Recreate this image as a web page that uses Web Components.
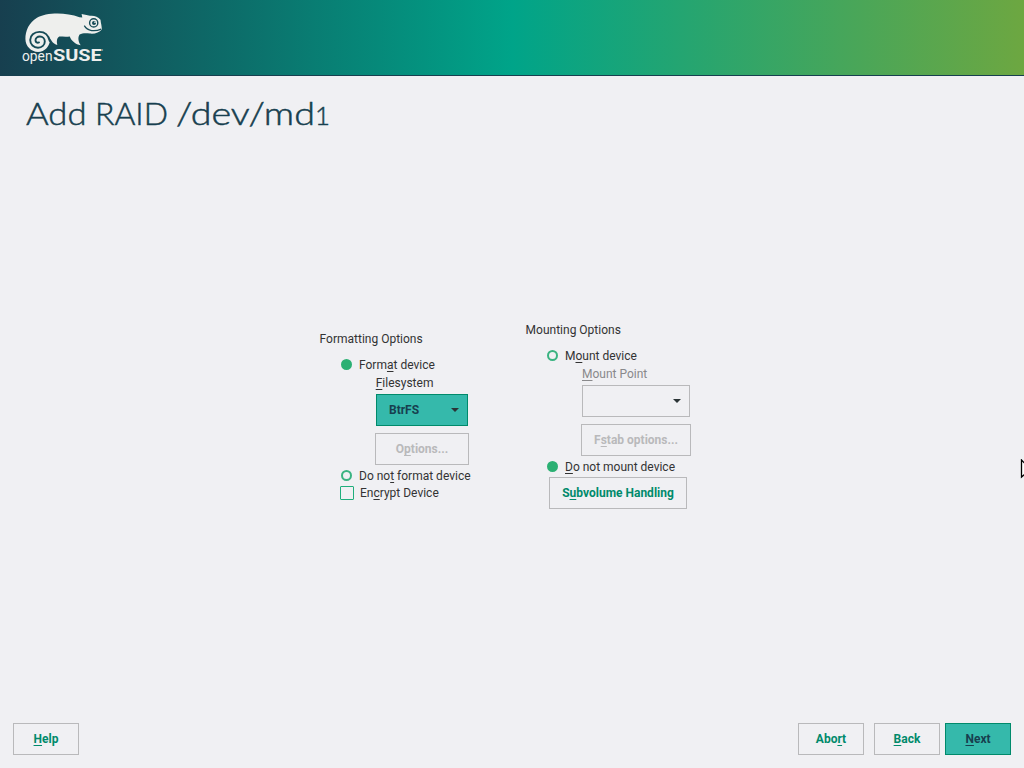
<!DOCTYPE html>
<html lang="en">
<head>
<meta charset="utf-8">
<title>Add RAID</title>
<style>
html,body{margin:0;height:100%;overflow:hidden;background:#f0f0f3}
body{font:12px/16px Roboto,sans-serif;color:#333}
</style>
</head>
<body>
<raid-installer></raid-installer>
<script>
const define = (name, html) => customElements.define(name, class extends HTMLElement {
  constructor() {
    super();
    this.attachShadow({ mode: 'open' }).innerHTML = html;
  }
});

define('hot-key', `<style>
:host{text-decoration:underline;text-decoration-thickness:1px;text-underline-offset:2px;text-decoration-skip-ink:none}
</style><slot></slot>`);

define('suse-logo', `<style>:host{display:block;width:104px;height:70px}svg{display:block}</style>
<svg width="110" height="70" viewBox="0 0 110 70" fill="#eeefed">
<path d="M25.400 39C25.300 31 29 22.500 37 17.800C46 12.600 65 12 79.500 17.200L82.300 17.400L81.600 14L90 15.800C94 15.300 98 16.700 100.500 19.700C100.800 23 101.900 26 101.800 29.500C99.500 32.600 95 34 90 33.600C86 33 82.500 33 79.600 34.500C77.500 37.400 78.400 42 80.700 45.300C75.500 44.500 71 40.500 69.800 36.500C66 37.200 62.500 36.600 59.300 36.600C56.500 38 56.700 41.800 57.300 44.900C53 43.700 51.500 40.700 50.200 38.400C50 46.500 44.700 51.900 38 51.900C31 51.900 25.400 46 25.400 39Z"/>
<path d="M49.800 41C48.400 35 44.600 31.900 39.500 31.900C34 31.900 30.200 35.600 30.200 40C30.200 44.500 33.700 47.700 38 47.700C42 47.700 44.800 45 44.800 41.500C44.800 38.600 42.600 36.500 39.900 36.500C37.300 36.500 35.400 38.200 35.500 40.400C35.600 42.200 37.200 43.200 39 42.400" fill="none" stroke="#164b57" stroke-width="1.900" stroke-linecap="round"/>
<path d="M84.300 25.600C87.500 31.500 95 31.700 101.200 29.100" fill="none" stroke="#164b57" stroke-width="1.200"/>
<circle cx="93.700" cy="22.900" r="4.100" fill="#eeefed" stroke="#164b57" stroke-width="1.400"/>
<circle cx="94" cy="22.900" r="2" fill="#164b57"/><ellipse cx="95" cy="22.200" rx="1" ry=".6"/>
<text x="22" y="61.300" font-family="Roboto,sans-serif" font-size="14" textLength="30.500" lengthAdjust="spacingAndGlyphs">open</text>
<text x="53" y="61.300" font-family="Roboto,sans-serif" font-weight="700" font-size="16" textLength="48.800" lengthAdjust="spacingAndGlyphs">SUSE</text>
<circle cx="102.500" cy="50" r=".7" opacity=".6"/>
</svg>`);

define('brand-bar', `<style>
:host{display:block;box-sizing:border-box;height:76px;border-bottom:1px solid #173f4f;background:linear-gradient(90deg,#173f4f 0%,#00a489 50%,#6da741 100%)}
</style><suse-logo></suse-logo>`);

define('page-title', `<style>:host{display:block;height:50px;padding-left:26px}svg{display:block;overflow:visible}
text{font-family:Lato,sans-serif;font-size:32px;font-weight:300;fill:#173f4f;stroke:#173f4f;stroke-width:.5px}</style>
<svg width="304" height="50" aria-label="Add RAID /dev/md1">
<text x="0" y="35" textLength="60.500" lengthAdjust="spacingAndGlyphs">Add</text>
<text x="69" y="35" textLength="73" lengthAdjust="spacingAndGlyphs">RAID</text>
<text x="150" y="35" textLength="139" lengthAdjust="spacingAndGlyphs">/dev/md</text>
<text x="289" y="35" style="font-size:25px" textLength="15" lengthAdjust="spacingAndGlyphs">1</text>
</svg>`);

define('push-button', `<style>
:host{display:flex;box-sizing:border-box;height:32px;min-width:66px;align-items:center;justify-content:center;border:1px solid #b9b9bb;color:#008a6b;font-weight:700}
:host([disabled]){color:#b9b9bb}
:host([primary]){background:#35b9ab;border-color:#008a6b;color:#173f4f}
</style><span><slot></slot></span>`);

define('combo-box', `<style>
:host{display:flex;box-sizing:border-box;height:32px;align-items:center;justify-content:space-between;padding:0 8px 0 12px;border:1px solid #b9b9bb;color:#173f4f;font-weight:700}
:host([active]){background:#35b9ab;border-color:#008a6b}
svg{display:block}
</style><span><slot></slot></span><svg width="8" height="4"><path d="M0 0H8L4 4Z" fill="#2b3436"/></svg>`);

define('radio-option', `<style>
:host{display:flex;height:18px;align-items:center;white-space:nowrap;padding-left:1px}
i{box-sizing:border-box;width:11px;height:11px;margin:0 7px 1px 0;border:2px solid #3ab381;border-radius:50%}
:host([checked]) i{background:#2bb073;border-color:#2bb073}
</style><i></i><span><slot></slot></span>`);

define('check-option', `<style>
:host{display:flex;height:16px;align-items:center;white-space:nowrap}
i{box-sizing:border-box;width:14px;height:14px;margin-right:6px;border:1px solid #1fae7c;border-radius:1px}
</style><i></i><span><slot></slot></span>`);

define('option-group', `<style>
:host{display:block;white-space:nowrap}
.head{padding-left:.6px}
.body{display:flex;flex-direction:column;align-items:flex-start;margin-top:9px;padding-left:21px}
</style><div class="head"><slot name="title"></slot></div><div class="body"><slot></slot></div>`);

define('raid-installer', `<style>
:host{display:flex;flex-direction:column;width:1024px;height:768px;position:relative;overflow:hidden}
page-title{margin-top:14px}
main{flex:1;display:flex;align-items:flex-start;gap:54px;padding:182px 0 0 319px}
.left{margin-top:9px;width:152px}
.label{height:18px;line-height:18px;margin-left:36px}
.dim{color:#89898b}
.fs{width:92px;margin:2px 0 0 36px}
.opt{width:94px;margin:7px 0 2px 35px}
.mp{width:108px;margin:2px 0 0 36px}
.fstab{width:110px;margin:7px 0 2px 35px}
.sub{width:138px;margin:1px 0 0 3px}
footer{display:flex;padding:0 13px 13px}
.gap{flex:1}
.back{margin:0 5px 0 10px}
.pointer{position:absolute;left:1020px;top:459px}
</style>
<brand-bar></brand-bar>
<page-title></page-title>
<main>
<option-group class="left"><span slot="title">Formatting Options</span>
<radio-option checked>Form<hot-key>a</hot-key>t device</radio-option>
<div class="label" style="margin-left:35.700px"><hot-key>F</hot-key>ilesystem</div>
<combo-box class="fs" active>BtrFS</combo-box>
<push-button class="opt" disabled>O<hot-key>p</hot-key>tions...</push-button>
<radio-option>Do no<hot-key>t</hot-key> format device</radio-option>
<check-option>En<hot-key>c</hot-key>rypt Device</check-option>
</option-group>
<option-group><span slot="title">Mounting Options</span>
<radio-option>M<hot-key>o</hot-key>unt device</radio-option>
<div class="label dim"><hot-key>M</hot-key>ount Point</div>
<combo-box class="mp"></combo-box>
<push-button class="fstab" disabled>F<hot-key>s</hot-key>tab options...</push-button>
<radio-option checked><hot-key>D</hot-key>o not mount device</radio-option>
<push-button class="sub">S<hot-key>u</hot-key>bvolume Handling</push-button>
</option-group>
</main>
<footer>
<push-button><hot-key>H</hot-key>elp</push-button><span class="gap"></span>
<push-button>Abo<hot-key>r</hot-key>t</push-button>
<push-button class="back"><hot-key>B</hot-key>ack</push-button>
<push-button primary><hot-key>N</hot-key>ext</push-button>
</footer>
<svg class="pointer" width="12" height="20"><path d="M1.500 1V18L6 14L9 13L10 10Z" fill="#fff" stroke="#000" stroke-width="1.300"/></svg>`);
</script>
</body>
</html>
